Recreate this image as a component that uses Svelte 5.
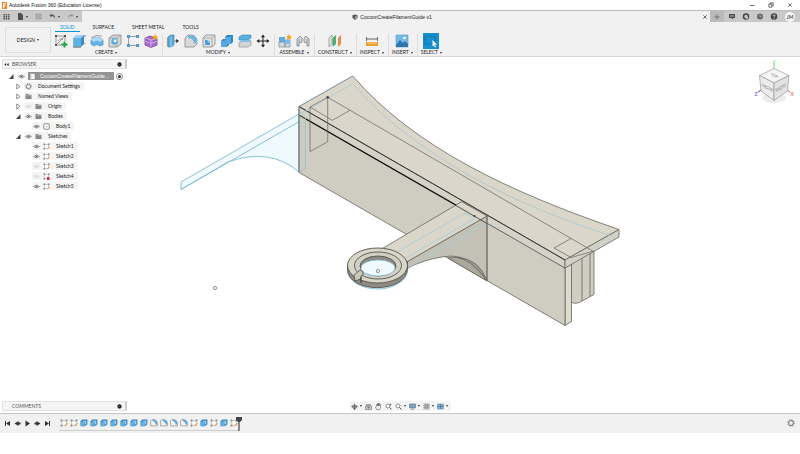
<script>
  const tabs = ['SOLID', 'SURFACE', 'SHEET METAL', 'TOOLS']
  let activeTab = $state('SOLID')

  const groups = [
    { label: 'CREATE', icons: ['newSketch', 'extrude', 'revolve', 'hole', 'pattern', 'form'] },
    { label: 'MODIFY', icons: ['pressPull', 'fillet', 'shell', 'combine', 'split', 'move'] },
    { label: 'ASSEMBLE', icons: ['component', 'joint'] },
    { label: 'CONSTRUCT', icons: ['plane'] },
    { label: 'INSPECT', icons: ['measure'] },
    { label: 'INSERT', icons: ['picture'] },
    { label: 'SELECT', icons: ['select'] }
  ]

  const tree = [
    { level: 1, label: 'Document Settings', arrow: 'closed', icon: 'gear' },
    { level: 1, label: 'Named Views', arrow: 'closed', icon: 'folder' },
    { level: 1, label: 'Origin', arrow: 'closed', eye: 'off', icon: 'folder' },
    { level: 1, label: 'Bodies', arrow: 'open', eye: 'on', icon: 'folder' },
    { level: 2, label: 'Body1', eye: 'on', icon: 'body' },
    { level: 1, label: 'Sketches', arrow: 'open', eye: 'on', icon: 'folder' },
    { level: 2, label: 'Sketch1', eye: 'on', icon: 'sketch' },
    { level: 2, label: 'Sketch2', eye: 'on', icon: 'sketch' },
    { level: 2, label: 'Sketch3', eye: 'off', icon: 'sketch' },
    { level: 2, label: 'Sketch4', eye: 'off', icon: 'sketchLocked' },
    { level: 2, label: 'Sketch5', eye: 'on', icon: 'sketch' }
  ]

  const playback = ['first', 'back', 'play', 'forward', 'last']
  const features = [
    ...Array(2).fill('sketch'),
    ...Array(7).fill('extrudeStep'),
    ...Array(4).fill('filletStep'),
    'sketch', 'extrudeStep', 'sketch', 'extrudeStep', 'sketch'
  ]

  const viewTools = [
    { icon: 'orbit', menu: true },
    { icon: 'lookAt' },
    { icon: 'pan' },
    { icon: 'zoomFit' },
    { icon: 'zoom', menu: true },
    { icon: 'display', menu: true },
    { icon: 'grid', menu: true },
    { icon: 'viewports', menu: true }
  ]
</script>

{#snippet icon(name)}
  <svg class="icon" viewBox="0 0 14 14" aria-hidden="true">
    {#if name === 'newSketch'}
      <path d="M2 2v9h6M2 2h9v5M2 11L11 2M4 7q3-4 5-1" fill="none" stroke="#888" stroke-width=".8" />
      <path d="M1 1h2v2H1zM10 1h2v2h-2zM1 10h2v2H1z" fill="#555" />
      <path d="M10.500 7.500v6M7.500 10.500h6" stroke="#18a345" stroke-width="1.800" />
    {:else if name === 'extrude'}
      <path d="M1.500 4l3-3H12v9l-3 3H1.500z" fill="#3f8fc4" />
      <path d="M1.500 4H9v9H1.500z" fill="#5eb1e6" />
      <path d="M1.500 4l3-3H12L9 4z" fill="#9bd3f5" />
      <path d="M1 13.200h8M13 1v2M12.800 9v1" stroke="#777" />
    {:else if name === 'revolve'}
      <path d="M1 6q6-6 12 0v5l-3 1q-3-3-6 0l-3-2z" fill="#62b3e6" stroke="#3e86b4" stroke-width=".6" />
      <path d="M1 6q6-6 12 0l-3 2Q7 5 4 8z" fill="#addbf5" />
      <path d="M1 4q5-4 11-2" fill="none" stroke="#888" stroke-width=".8" />
    {:else if name === 'hole'}
      <path d="M1 4l4-3h8v9l-4 3H1z" fill="#d5d5d5" stroke="#8b8b8b" stroke-width=".8" />
      <path d="M1 4h8v9M9 4l4-3" fill="none" stroke="#9a9a9a" stroke-width=".7" />
      <circle cx="6.500" cy="7.500" r="3.200" fill="#5caede" />
      <circle cx="7.200" cy="6.800" r="1.600" fill="#e8f4fb" />
    {:else if name === 'pattern'}
      <path d="M3 2.500h8M2.500 3v8M3 11.500h7" fill="none" stroke="#888" stroke-width=".8" />
      <path d="M1 1h3v3H1zM10 1h3v3h-3zM1 10h3v3H1zM10 10h3v3h-3z" fill="#4f9bd0" />
    {:else if name === 'form'}
      <path d="M1 4l5-2 7 2v7l-6 2.500L1 11z" fill="#a66cc9" stroke="#7b45a3" stroke-width=".8" />
      <path d="M1 4l6 2 6-2M7 6v7M1 7.500l6 2 6-2" fill="none" stroke="#d8b6ec" stroke-width=".8" />
      <path d="M11 0l1 2 2 .5-1.500 1.300.3 2.200L11 5 9 6l.4-2.200L8 2.300l2-.3z" fill="#f5a41c" />
    {:else if name === 'pressPull'}
      <path d="M2 3l3-2h3v10l-3 2H2z" fill="#58a9db" stroke="#3d7fae" stroke-width=".6" />
      <path d="M1.500 3.500v9" stroke="#999" stroke-width="1.200" />
      <path d="M5 3v10" stroke="#b7def4" stroke-width=".8" />
      <path d="M8.500 7H11M10.500 5.500L12.500 7l-2 1.500z" fill="#222" stroke="#222" stroke-width=".6" />
    {:else if name === 'fillet'}
      <path d="M1 4l3-3h4q5 1 5 7v2l-3 3H1z" fill="#d9d9d9" stroke="#888" stroke-width=".8" />
      <path d="M4 1.500h4q5 1 5 6.500l-3 2Q10 4 4 4z" fill="#6ab6e4" />
    {:else if name === 'shell'}
      <path d="M1 4l3-3h9v9l-3 3H1z" fill="#e2e2e2" stroke="#888" stroke-width=".8" />
      <path d="M3 6h5v5H3z" fill="#4f9fd4" />
      <path d="M5 6h3v3z" fill="#b8def4" />
      <path d="M1 4h9v9M10 4l3-3" fill="none" stroke="#999" stroke-width=".7" />
    {:else if name === 'combine'}
      <path d="M1 7l2-2h2V3l2-2h6v7l-2 2H9v1l-2 2H1z" fill="#2f87c6" />
      <path d="M1 7h4V3h6v7H7v3H1z" fill="#55a9e0" />
    {:else if name === 'split'}
      <path d="M1 3l3-2h9v3L10 6H1z" fill="#5cafe3" stroke="#3d83b3" stroke-width=".6" />
      <path d="M1 9l3-2h9v4l-3 2H1z" fill="#d4d4d4" stroke="#888" stroke-width=".6" />
      <path d="M1 8l3-2h9l-3 2z" fill="#7cc2ec" />
    {:else if name === 'move'}
      <path d="M7 2v10M2 7h10" stroke="#222" />
      <path d="M7 .5l2 2.800H5zM7 13.500l2-2.800H5zM.5 7l2.800-2v4zM13.500 7l-2.800-2v4z" fill="#222" />
    {:else if name === 'component'}
      <path d="M1 3h6v5H1z" fill="#5cafe3" />
      <path d="M1 8h6v5H1zM7 6h5v7H7z" fill="#d3d8dc" stroke="#808890" stroke-width=".7" />
      <path d="M7 6h5v4H7z" fill="#78bde9" />
      <path d="M11 0l1 2 2 .5-1.500 1.300.3 2.200L11 5 9 6l.4-2.200L8 2.300l2-.3z" fill="#f5a41c" />
    {:else if name === 'joint'}
      <path d="M1 12V5l3-3 2 2v4l-3 1v3zM13 12V5l-3-3-2 2v4l3 1v3z" fill="#d4d7d9" stroke="#7d8488" stroke-width=".8" />
      <path d="M3 5v4M11 5v4" stroke="#8b9094" stroke-width=".8" />
    {:else if name === 'plane'}
      <path d="M1 4l3-3v9l-3 3z" fill="#e4e4e4" stroke="#888" stroke-width=".7" />
      <path d="M4.500 4L8 1v9l-3.500 3z" fill="#4cae72" />
      <path d="M10 4l3-3v9l-3 3z" fill="#e98b4e" />
    {:else if name === 'measure'}
      <path d="M1.500 3v4M12.500 3v4M2 5h10" stroke="#444" stroke-width=".8" fill="none" />
      <path d="M1 8h12v4H1z" fill="#e9a12e" />
      <path d="M3 8v2M5 8v2M7 8v2M9 8v2M11 8v2" stroke="#fff1cf" stroke-width=".6" />
    {:else if name === 'picture'}
      <path d="M1 1h12v12H1z" fill="#74b9e8" stroke="#5597c7" stroke-width=".6" />
      <path d="M1 11l4-5 3 3 2-2 3 3v3H1z" fill="#2f76ab" />
      <circle cx="9.500" cy="4" r="1.300" fill="#fff" />
    {:else if name === 'select'}
      <path d="M-1-1h16v16H-1z" fill="#158fcd" />
      <path d="M1 2h10v8H1z" fill="none" stroke="#0b4f7c" stroke-width=".7" stroke-dasharray="1 1" />
      <path d="M8.500 6l4.500 4.500-2 .2 1 2.200-1 .5-1-2.200-1.500 1.300z" fill="#fff" />
    {:else if name === 'extrudeStep'}
      <path d="M1 4l3-3h9v8l-3 3H1z" fill="#3787c0" />
      <path d="M1 5h7v8H1z" fill="#62aede" />
      <path d="M5 3h6v6H8V5H5z" fill="#9cccec" />
    {:else if name === 'filletStep'}
      <path d="M1 3l2-2h4q6 1 6 7v4H1z" fill="#f2f2f2" stroke="#888" stroke-width="1.200" />
      <path d="M6 1q7 1 7 8l-3 1Q10 5 4 3z" fill="#5aa7d8" />
    {:else if name === 'sketch' || name === 'sketchLocked'}
      <path d="M3 3h8v8H3z" fill="#fff" stroke="#9a9a9a" />
      <path d="M1 1h3v3H1zM10 1h3v3h-3zM1 10h3v3H1z" fill="#888" />
      {#if name === 'sketch'}
        <path d="M8 13l1-3 4-3 1 1-4 4z" fill="#f29a3b" />
      {:else}
        <path d="M8 8h5v6H8z" fill="#cf2b3c" />
      {/if}
    {:else if name === 'gear'}
      <circle cx="7" cy="7" r="4.200" fill="none" stroke="#777" stroke-width="1.800" />
      <circle cx="7" cy="7" r="6" fill="none" stroke="#777" stroke-width="1.500" stroke-dasharray="2 2.700" />
    {:else if name === 'folder'}
      <path d="M1 2h5l1 1.500h6V12H1z" fill="#888" />
      <path d="M1 5h12" stroke="#bbb" />
    {:else if name === 'body'}
      <rect x="1.500" y="1.500" width="11" height="11" rx="2" fill="#fff" stroke="#555" stroke-width="1.300" />
      <path d="M7 5v5M5 7h5" stroke="#bbb" />
    {:else if name === 'document'}
      <path d="M2 1h10v12H2z" fill="#fff" stroke="#777" />
      <path d="M2 1h3v12H2z" fill="#ccc" />
    {:else if name === 'eyeOn' || name === 'eyeOff'}
      <g opacity={name === 'eyeOn' ? 1 : 0.2}>
        <path d="M1 7q6-6 12 0-6 6-12 0z" fill="#fff" stroke="#666" stroke-width="1.300" />
        <circle cx="7" cy="7" r="2.200" fill="#666" />
      </g>
    {:else if name === 'closed'}
      <path d="M3.500 2v10L10 7z" fill="#fff" stroke="#444" stroke-width="1.200" />
    {:else if name === 'open'}
      <path d="M11 2v10H2z" fill="#444" />
    {:else if name === 'first'}
      <path d="M3 2v10" stroke="#333" stroke-width="2" /><path d="M12 2v10L4 7z" fill="#333" />
    {:else if name === 'back'}
      <path d="M9 2v10L1 7zM9 5h4v4H9z" fill="#333" />
    {:else if name === 'play'}
      <path d="M3 1v12l9-6z" fill="#333" />
    {:else if name === 'forward'}
      <path d="M5 2v10l8-5zM1 5h4v4H1z" fill="#333" />
    {:else if name === 'last'}
      <path d="M11 2v10" stroke="#333" stroke-width="2" /><path d="M2 2v10l8-5z" fill="#333" />
    {:else if name === 'apps'}
      <path d="M1 2h3v3H1zM5.500 2h3v3h-3zM10 2h3v3h-3zM1 6h3v3H1zM5.500 6h3v3h-3zM10 6h3v3h-3zM1 10h3v3H1zM5.500 10h3v3h-3zM10 10h3v3h-3z" fill="#555" />
    {:else if name === 'file'}
      <path d="M2 0h7l3 3v11H2z" fill="#505050" /><path d="M9 0v3h3" fill="#bbb" />
    {:else if name === 'save'}
      <path d="M2 2h10v10H2zM4 2v4h6V2M4 12V8h6v4" fill="none" stroke="#8c8c8c" stroke-width="1.300" />
    {:else if name === 'undo'}
      <path d="M5 1L1 5l4 4V6q5-1 7 5 1-8-7-8z" fill="#555" />
    {:else if name === 'redo'}
      <path d="M9 1l4 4-4 4V6Q4 5 2 11 1 3 9 3z" fill="#999" />
    {:else if name === 'comment'}
      <path d="M1 2h12v8H9v3l-3-3H1z" fill="#4b4b4b" /><path d="M3 5h8M3 7h8" stroke="#bbb" />
    {:else if name === 'extensions'}
      <circle cx="7" cy="7" r="5" fill="none" stroke="#444" stroke-width="3" /><path d="M6 13l3-5 4 2" fill="#c9c9c9" />
    {:else if name === 'clock'}
      <circle cx="7" cy="7" r="6" fill="#666" /><path d="M7 3v4h3" fill="none" stroke="#ccc" stroke-width="1.300" />
    {:else if name === 'help'}
      <circle cx="7" cy="7" r="6.500" fill="#444" />
      <path d="M5 5.500q0-2 2-2t2 2q0 1-2 2V9M7 10v1.500" fill="none" stroke="#fff" stroke-width="1.400" />
    {:else if name === 'cube'}
      <path d="M1 3l6-2 6 2v6l-6 5-6-5z" fill="#555" /><path d="M7 5l6-2v6l-6 5z" fill="#999" />
    {:else if name === 'orbit'}
      <path d="M7 1v12M2 7h10" stroke="#555" stroke-width="1.500" />
      <ellipse cx="7" cy="7" rx="6" ry="2.500" fill="none" stroke="#555" stroke-width="1.300" />
      <path d="M4 10h6l-3 4z" fill="#555" />
    {:else if name === 'lookAt'}
      <path d="M1 6h12v7H1zM3 6V3h8v3" fill="#ccc" stroke="#777" stroke-width="1.300" /><circle cx="7" cy="9" r="2" fill="#777" />
    {:else if name === 'pan'}
      <path d="M3 13L1 8l2-1V3h2v3-5h2v5-5h2v5-3h2v6l-2 4z" fill="#f5f5f5" stroke="#555" stroke-width="1.100" />
    {:else if name === 'zoomFit' || name === 'zoom'}
      <circle cx="6" cy="6" r="4" fill="#fff" stroke="#666" stroke-width="1.400" />
      <path d="M9 9l4 4" stroke="#555" stroke-width="2" />
      {#if name === 'zoomFit'}<path d="M11 1v5M9 3h4" stroke="#555" />{/if}
    {:else if name === 'display'}
      <path d="M1 2h12v8H1z" fill="#7aa2c0" stroke="#617786" stroke-width="1.200" /><path d="M4 12.500h6" stroke="#777" stroke-width="1.500" />
    {:else if name === 'grid'}
      <path d="M1 1h12v12H1z" fill="#bbb" /><path d="M1 5h12M1 9h12M5 1v12M9 1v12" stroke="#888" />
    {:else if name === 'viewports'}
      <path d="M1 2h12v10H1z" fill="#8bb4d8" stroke="#557ea5" /><path d="M7 2v10M1 7h12" stroke="#446b91" stroke-width="1.400" />
    {:else if name === 'minimize'}
      <path d="M2 8h11" stroke="#222" stroke-width="1.600" />
    {:else if name === 'restore'}
      <path d="M2 5h7v7H2zM5 5V2h7v7H9" fill="none" stroke="#222" stroke-width="1.500" />
    {:else if name === 'close'}
      <path d="M3 3l8 8M11 3l-8 8" stroke="#333" stroke-width="1.600" />
    {:else if name === 'plus'}
      <path d="M7 1v12M1 7h12" stroke="#666" stroke-width="2" />
    {:else if name === 'collapse'}
      <path d="M6 3v8L1 7zM13 3v8L8 7z" fill="#222" />
    {:else if name === 'pin'}
      <circle cx="7" cy="7" r="6" fill="#222" /><path d="M4 7h6" stroke="#aaa" />
    {:else if name === 'radio'}
      <circle cx="7" cy="7" r="6" fill="#fff" stroke="#444" stroke-width="1.200" /><circle cx="7" cy="7" r="3" fill="#333" />
    {/if}
  </svg>
{/snippet}

<div class="app">
  <header class="titlebar">
    <svg class="logo" viewBox="0 0 8 8" aria-hidden="true">
      <path d="M1 0h6v8H1z" fill="#f08224" />
      <path d="M3 7V2h3M3 4.500h2" fill="none" stroke="#fff" stroke-width="1.300" />
    </svg>
    <span class="product">Autodesk Fusion 360 (Education License)</span>
    <div class="window-buttons">
      <button aria-label="Minimize">{@render icon('minimize')}</button>
      <button aria-label="Restore">{@render icon('restore')}</button>
      <button aria-label="Close">{@render icon('close')}</button>
    </div>
  </header>

  <div class="docbar">
    <div class="quick">
      <button aria-label="Data panel">{@render icon('apps')}</button>
      <button class="menu" aria-label="File">{@render icon('file')}</button>
      <button aria-label="Save">{@render icon('save')}</button>
      <button class="menu" aria-label="Undo">{@render icon('undo')}</button>
      <button class="menu" aria-label="Redo">{@render icon('redo')}</button>
    </div>
    <div class="doc-tab">
      <span class="doc-name">{@render icon('cube')}CocoonCreateFilamentGuide v1</span>
      <button aria-label="Close document">{@render icon('close')}</button>
    </div>
    <button class="new-tab" aria-label="New document">{@render icon('plus')}</button>
    <div class="account">
      <button aria-label="Comments">{@render icon('comment')}</button>
      <button aria-label="Extensions">{@render icon('extensions')}</button>
      <button aria-label="Job status">{@render icon('clock')}</button>
      <button aria-label="Help">{@render icon('help')}</button>
      <button class="avatar">JM</button>
    </div>
  </div>

  <div class="ribbon">
    <button class="workspace menu">DESIGN</button>
    <div class="ribbon-main">
      <nav class="tabs">
        {#each tabs as tab}
          <button class:active={tab === activeTab} onclick={() => (activeTab = tab)}>{tab}</button>
        {/each}
      </nav>
      <div class="groups">
        {#each groups as group}
          <div class="group">
            <div class="tools">
              {#each group.icons as name}
                <button aria-label={name}>{@render icon(name)}</button>
              {/each}
            </div>
            <button class="group-label menu">{group.label}</button>
          </div>
        {/each}
      </div>
    </div>
  </div>

  <main class="stage">
    <svg class="model" viewBox="0 57 800 356" role="img" aria-label="Model view">
      <g stroke="#7fb9d2" stroke-width=".9">
        <path d="M181 182L299 114V172Q270 147 228 162L181 189.500z" fill="#eff9fe" />
        <path d="M181 189.500L299 121.700" fill="none" />
      </g>

      <g stroke="#66645d" stroke-width=".8" stroke-linejoin="round">
        <path d="M571 263L594 250v44.500L582 301q-6 4-11 1z" fill="#d0cec3" />
        <path d="M582 257v44M590 253v43" fill="none" />
        <path d="M565 268V325.500l6.500-4V264z" fill="#dddbd0" />
        <path d="M299 115L565 268V325.500L299 172.500z" fill="#cfcdc1" />
        <path d="M299 106.500L352.700 76C415 148 510 192 619 229.500L565 260z" fill="#dad6ca" />
        <path d="M299 106.500L565 260V268L299 115z" fill="#d3d3c9" />
        <path d="M565 260L619 229.500V237L565 268z" fill="#d0d2c7" />
      </g>
      <path d="M299 106.500L565 260" stroke="#33322f" stroke-width=".9" />
      <path d="M299 106.500L352.700 76" stroke="#8fb4c1" stroke-width=".6" />
      <path d="M299 115L475 216" stroke="#111" stroke-width="1.300" />
      <path d="M299 115L352.700 83.500C415 157 520 207 612 236" fill="none" stroke="#a8c6cf" stroke-width=".8" />
      <path d="M299 106V172.500l6.500-4V118" fill="#b9ccd055" stroke="#9dbac2" stroke-width=".7" />
      <path d="M299 106V172.500M327.700 97.300L592.700 251M327.700 97.300V141.700L310 151.500V107L332.300 120.300 350 110.300M310 107L327.700 97.300M571 238.500L554 248 571 257.500 594 251" fill="none" stroke="#66645d" stroke-width=".7" />
      <circle cx="327.700" cy="97.300" r="1.300" fill="#444" />

      <g stroke="#66645d" stroke-width=".8" stroke-linejoin="round">
        <path d="M448 258Q472 253 487 281z" fill="#aaa89d" />
        <path d="M406.500 262L487 216V280.700C474 264 465 253 442 257Q423 260 408 268z" fill="#c3c1b6" />
        <path d="M458 257.500Q479 259 487 280.700Q472 260 458 257.500z" fill="#9e9d93" />
        <path d="M381.500 249L461.700 201.700 487 216 406.500 262l-14 6z" fill="#dad6ca" />
        <path d="M487 216V281" />
      </g>
      <g fill="none" stroke="#a4cbdc" stroke-width=".8">
        <path d="M395 253L465 213 475 218.500 404 259z" />
        <path d="M408 268L487 222.500" />
      </g>
      <path d="M455 205L487 223.500" stroke="#33322f" stroke-width=".8" />
      <circle cx="474.500" cy="216" r="1" fill="#333" />

      <ellipse cx="377.500" cy="270" rx="30" ry="19" fill="#e9f6fc" stroke="#79bddb" stroke-width=".9" />
      <g stroke="#55534d" stroke-width=".9">
        <path d="M347.500 265v4C348 294 407 294 407.500 268v-6l-1-1z" fill="#8d8b83" />
        <ellipse cx="377.500" cy="265.500" rx="30" ry="17.500" fill="#d8d5c9" />
        <ellipse cx="378" cy="265.500" rx="23.500" ry="13.500" fill="#d2cfc4" />
        <ellipse cx="378" cy="266" rx="18" ry="10" fill="#8d8b83" />
      </g>
      <ellipse cx="378" cy="268" rx="17" ry="8" fill="#eff9fe" stroke="#79bddb" stroke-width=".7" />
      <path d="M354 275l6-5 3 2v3l-2 1v3l-6 2z" fill="#c9c6ba" stroke="#4d4b46" stroke-width=".8" />
      <path d="M361 277v6" stroke="#333" />
      <g fill="#f7f7f7" stroke="#777" stroke-width=".8">
        <circle cx="378" cy="271" r="1.600" />
        <circle cx="215" cy="288" r="1.600" />
      </g>
    </svg>

    <section class="browser" aria-label="Browser">
      <div class="panel-head">
        {@render icon('collapse')}
        <span>BROWSER</span>
        {@render icon('pin')}
      </div>
      <ul class="tree">
        <li class="root">
          {@render icon('open')}
          <button class="node">
            {@render icon('eyeOn')}
            <span class="root-name">{@render icon('document')}<span>CocoonCreateFilamentGuide...</span></span>
          </button>
          {@render icon('radio')}
        </li>
        {#each tree as row}
          <li class:child={row.level === 2}>
            {#if row.arrow}{@render icon(row.arrow)}{/if}
            <button class="node">
              {#if row.eye}{@render icon(row.eye === 'on' ? 'eyeOn' : 'eyeOff')}{/if}
              {@render icon(row.icon)}
              <span class="name">{row.label}</span>
            </button>
          </li>
        {/each}
      </ul>
    </section>

    <svg class="view-cube" viewBox="0 0 44 50" role="img" aria-label="View cube">
      <ellipse cx="22" cy="41" rx="12" ry="5" fill="#ececec" />
      <path d="M22 12V6" stroke="#72d672" />
      <path d="M9 33l-3 2" stroke="#4444b8" />
      <path d="M35 33l3 2" stroke="#d84a4a" />
      <g stroke="#999" stroke-width=".7" stroke-linejoin="round">
        <path d="M22 11.500L37 18.500 22 26 7.500 18.500z" fill="#f6f6f6" />
        <path d="M7.500 18.500L22 26V43.500L9 34z" fill="#ececec" />
        <path d="M37 18.500L22 26V43.500L35.500 34z" fill="#e2e2e2" />
      </g>
      <g class="faces" fill="#777">
        <text x="22" y="20" transform="rotate(26 22 19)">TOP</text>
        <text x="15" y="32" transform="rotate(28 15 31)">FRONT</text>
        <text x="29" y="32" transform="rotate(-28 29 31)">RIGHT</text>
      </g>
      <g class="axes">
        <text x="22" y="7" fill="#6bd86b">Y</text>
        <text x="4" y="39" fill="#4444b8">Z</text>
        <text x="40" y="39" fill="#d84a4a">X</text>
      </g>
    </svg>

    <div class="panel-head comments">
      <span>COMMENTS</span>
      {@render icon('pin')}
    </div>

    <div class="view-tools">
      {#each viewTools as tool}
        <button class:menu={tool.menu} aria-label={tool.icon}>{@render icon(tool.icon)}</button>
      {/each}
    </div>
  </main>

  <footer class="timeline">
    <div class="playback">
      {#each playback as name}
        <button aria-label={name}>{@render icon(name)}</button>
      {/each}
    </div>
    <div class="features">
      {#each features as name}
        <button aria-label={name}>{@render icon(name)}</button>
      {/each}
    </div>
    <svg class="marker" viewBox="0 0 6 14" aria-hidden="true">
      <path d="M0 0h6v3L4 5H2L0 3z" fill="#444" />
      <path d="M3 4v10" stroke="#444" stroke-width="1.200" />
    </svg>
    <button class="settings" aria-label="Timeline settings">{@render icon('gear')}</button>
  </footer>
</div>

<style>
  :global(body) {
    margin: 0;
    background: #fff;
  }

  .app {
    font-family: Lato, 'Liberation Sans', sans-serif;
    font-size: 5px;
    line-height: 8px;
    color: #222;
  }

  button {
    display: flex;
    align-items: center;
    padding: 0;
    border: 0;
    background: none;
    font: inherit;
    color: inherit;
    cursor: pointer;
  }

  .icon {
    display: block;
    flex: none;
    width: 8px;
    height: 8px;
  }

  .menu::after {
    content: '';
    margin-left: 2px;
    border: 1px solid transparent;
    border-top: 2px solid #333;
    border-bottom: 0;
  }

  .product,
  .doc-name,
  .root-name {
    font-family: 'Liberation Sans', sans-serif;
  }

  .titlebar {
    display: flex;
    align-items: center;
    height: 10px;
    padding: 0 7px 0 1px;
    color: #111;
  }

  .logo {
    width: 7px;
    height: 7px;
    margin-right: 1px;
  }

  .window-buttons {
    display: flex;
    gap: 13px;
    margin-left: auto;
  }

  .window-buttons .icon {
    width: 6px;
    height: 6px;
  }

  .docbar {
    display: flex;
    height: 12px;
    border-top: 1px solid #bcbcbc;
    box-sizing: border-box;
    background: #c9c9c9;
  }

  .quick {
    display: flex;
    align-items: center;
    gap: 7px;
    width: 82px;
    padding-left: 3px;
    box-sizing: border-box;
  }

  .quick .icon {
    width: 7px;
    height: 7px;
  }

  .doc-tab {
    display: flex;
    flex: 1;
    align-items: center;
    padding-right: 2px;
    background: #f1f1f1;
  }

  .doc-tab .icon {
    width: 6px;
    height: 6px;
  }

  .doc-name {
    display: flex;
    align-items: center;
    gap: 2px;
    margin: 0 auto;
  }

  .new-tab {
    justify-content: center;
    width: 14px;
    background: #bababa;
  }

  .new-tab .icon {
    width: 6px;
    height: 6px;
  }

  .account {
    display: flex;
    align-items: center;
    gap: 6px;
    padding: 0 5px 0 4px;
  }

  .account .icon {
    height: 7px;
  }

  .avatar {
    justify-content: center;
    width: 10px;
    height: 10px;
    margin-left: 1px;
    border-radius: 50%;
    background: #f5f5f5;
  }

  .ribbon {
    display: flex;
    border-bottom: 1px solid #d8d8d8;
    background: #f1f1f1;
  }

  .workspace {
    justify-content: center;
    width: 46px;
    margin: 5px 0 3px 5px;
    border: 1px solid #ddd;
    border-radius: 1px;
    box-sizing: border-box;
  }

  .tabs {
    display: flex;
    gap: 8px;
    padding-left: 4px;
  }

  .tabs button {
    padding: 1px 5px 0;
    border-bottom: 1px solid transparent;
  }

  .tabs .active {
    color: #0696d7;
    border-color: #0696d7;
  }

  .groups {
    display: flex;
    padding-top: 2px;
  }

  .group {
    display: flex;
    flex-direction: column;
    align-items: center;
    padding: 0 4px 0 3px;
    border-right: 1px solid #dcdcdc;
  }

  .group:last-child {
    border-right: 0;
  }

  .group-label {
    padding-top: 1px;
    line-height: 7px;
  }

  .tools {
    display: flex;
    gap: 4px;
  }

  .tools .icon {
    width: 14px;
    height: 14px;
    overflow: visible;
  }

  .stage {
    display: grid;
    border-bottom: 1px solid #c6c6c6;
  }

  .stage > * {
    grid-area: 1 / 1;
  }

  .model {
    display: block;
    width: 100%;
    height: auto;
  }

  .browser {
    width: 125px;
    margin: 2px 0 0 2px;
  }

  .panel-head {
    display: flex;
    align-items: center;
    gap: 3px;
    height: 10px;
    padding: 0 3px 0 1px;
    border: 1px solid #e2e2e2;
    border-right: 2px solid #ccc;
    box-sizing: border-box;
    background: #f4f4f4;
    color: #555;
  }

  .panel-head span {
    margin-right: auto;
  }

  .panel-head .icon {
    width: 5px;
    height: 5px;
  }

  .tree {
    margin: 2px 0 0;
    padding: 0;
    list-style: none;
  }

  .tree li {
    display: flex;
    align-items: center;
    gap: 2px;
    height: 10px;
    padding-left: 13px;
  }

  .tree li.child {
    padding-left: 30px;
  }

  .tree li.root {
    padding: 0 4px 0 6px;
  }

  .tree .icon {
    width: 7px;
    height: 7px;
  }

  .node {
    gap: 3px;
    height: 8px;
    padding: 0 4px 0 1px;
    background: #f4f4f4;
  }

  .name {
    padding-left: 3px;
  }

  .root .node {
    flex: 1;
    padding-right: 0;
  }

  .root-name {
    display: flex;
    flex: 1;
    align-items: center;
    gap: 4px;
    padding-left: 1px;
    background: #939393;
    color: #fff;
  }

  .view-cube {
    justify-self: end;
    width: 44px;
    height: 50px;
    margin-right: 4px;
  }

  .view-cube text {
    text-anchor: middle;
  }

  .faces {
    font-size: 4px;
  }

  .axes {
    font-size: 5px;
  }

  .comments {
    align-self: end;
    width: 125px;
    margin: 0 0 2px 2px;
    padding-left: 9px;
  }

  .view-tools {
    display: flex;
    align-items: center;
    justify-self: center;
    align-self: end;
    gap: 3px;
    height: 10px;
    margin-bottom: 2px;
    padding: 0 3px 0 1px;
    background: #f4f4f4;
  }

  .view-tools .icon {
    width: 7px;
    height: 7px;
  }

  .timeline {
    display: flex;
    align-items: flex-start;
    height: 19px;
    padding: 0 5px 0 3px;
    background: #f1f1f1;
  }

  .playback {
    display: flex;
    gap: 2px;
    padding-top: 5px;
  }

  .playback button {
    justify-content: center;
    width: 8px;
    height: 8px;
  }

  .playback .icon {
    width: 7px;
    height: 7px;
  }

  .features {
    display: flex;
    margin: 5px 0 0 8px;
  }

  .features button {
    justify-content: center;
    width: 10px;
    height: 12px;
    padding-bottom: 3px;
    border-bottom: 1px solid #ccc;
    box-sizing: border-box;
  }

  .marker {
    width: 6px;
    height: 14px;
    margin: 3px 0 0 -3px;
  }

  .settings {
    margin: 5px 0 0 auto;
  }
</style>
